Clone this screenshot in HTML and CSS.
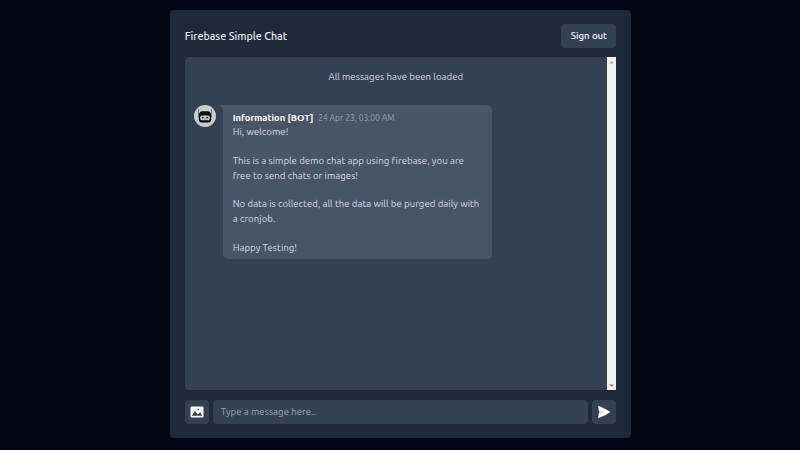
FILE: index.html
```html
<!DOCTYPE html>
<html lang="en">
<head>
<meta charset="utf-8">
<title>Firebase Simple Chat</title>
<link rel="stylesheet" href="styles.css">
</head>
<body>
<main class="panel">
  <header class="header">
    <h1 class="title">Firebase Simple Chat</h1>
    <button class="button signout">Sign out</button>
  </header>
  <section class="chat">
    <div class="messages">
      <p class="loaded">All messages have been loaded</p>
      <article class="message">
        <svg class="avatar" viewBox="0 0 22 22">
          <circle cx="11" cy="11" r="11" fill="#c9ccd3"/>
          <path d="M4.6 4v8M17.4 4v8" stroke="#5c6068" stroke-width=".8"/>
          <path d="M4.8 11Q4.8 6.2 8.5 6.2h5Q17.2 6.2 17.2 11v3.5Q17.2 17.6 14 17.6H8Q4.8 17.6 4.8 14.5z" fill="#090909"/>
          <rect x="6.2" y="10.4" width="9.6" height="4.8" rx="1.8" fill="#c9ccd3"/>
          <circle cx="8.7" cy="12.6" r=".95" fill="#111"/><circle cx="13.3" cy="12.6" r=".95" fill="#111"/>
          <path d="M10 13.9h2" stroke="#333" stroke-width=".5"/>
        </svg>
        <div class="bubble">
          <div class="meta"><strong class="author">Information [BOT]</strong><time class="time">24 Apr 23, 03:00 AM</time></div>
          <p class="line">Hi, welcome!</p>
          <p class="line gap">This is a simple demo chat app using firebase, you are<br>free to send chats or images!</p>
          <p class="line gap">No data is collected, all the data will be purged daily with<br>a cronjob.</p>
          <p class="line gap">Happy Testing!</p>
        </div>
      </article>
    </div>
    <div class="scrollbar">
      <svg viewBox="0 0 9 9"><path d="M2 6.4 4.5 4 7 6.4z" fill="#a3a3a3"/></svg>
      <svg viewBox="0 0 9 9"><path d="M2 3.4 4.5 5.8 7 3.4z" fill="#7c7c7c"/></svg>
    </div>
  </section>
  <footer class="composer">
    <button class="button icon" aria-label="Image">
      <svg class="image-icon" viewBox="0 0 14 12"><rect x=".5" y=".5" width="13" height="11" rx="1.3" fill="#fff"/><path d="M1.8 9.7 5 5 7.8 8.4 10 6.2 12.3 9.7z" fill="#334155"/><circle cx="8.3" cy="3.4" r=".9" fill="#64748b"/></svg>
    </button>
    <div class="input">Type a message here..</div>
    <button class="button icon" aria-label="Send">
      <svg class="send-icon" viewBox="0 0 14 14"><path d="M1.3 1.2Q5 2.2 13 6.9 8 10.7 1.3 12.8L2.4 7.5 7.2 7 2.4 6.5z" fill="#fff" stroke="#fff" stroke-width=".5" stroke-linejoin="round"/></svg>
    </button>
  </footer>
</main>
</body>
</html>
```
FILE: styles.css
```css
* { box-sizing: border-box; margin: 0; padding: 0; }
body {
  height: 450px;
  overflow: hidden;
  padding-top: 9.6px;
  background: #020617;
  color: #e8edf4;
  font: 9.6px/14.4px "Ubuntu", "Noto Sans", sans-serif;
}
.panel {
  display: flex;
  flex-direction: column;
  width: 460.8px;
  height: 428.4px;
  margin: 0 auto 0 170.2px;
  padding: 14.4px 14.7px 14.4px 14.5px;
  border-radius: 4px;
  background: #1e293b;
}
.header { display: flex; justify-content: space-between; align-items: center; height: 24px; margin-bottom: 9.4px; }
.title { font-size: 10.7px; font-weight: 500; }
.button { border: 0; border-radius: 4px; background: #334155; color: #f8fafc; font: inherit; }
.signout { width: 55.2px; height: 24px; padding-left: .5px; font-weight: 500; }
.chat { display: flex; flex: 1; overflow: hidden; border-radius: 4px 0 0 4px; background: #334155; }
.messages { flex: 1; padding: 9.6px; }
.loaded { height: 19.2px; line-height: 19.2px; margin-bottom: 19px; text-align: center; color: #d3dbe6; letter-spacing: .045px; }
.message { display: flex; }
.avatar { width: 22px; height: 22px; margin-right: 7px; }
.bubble {
  position: relative;
  width: 268.6px;
  height: 153.5px;
  padding: 5.9px 9.4px 0;
  border-radius: 0 4.8px 4.8px 4.8px;
  background: #475569;
  color: #d3dbe6;
}
.bubble::before { content: ""; position: absolute; left: -4px; top: 0; border-top: 5px solid #475569; border-left: 5px solid transparent; }
.meta { display: flex; gap: 4.8px; height: 14.4px; white-space: nowrap; }
.author { color: #fff; font-size: 9.4px; font-weight: 700; }
.time { font-size: 8.45px; color: #94a3b8; }
.line { white-space: nowrap; letter-spacing: .048px; }
.gap { margin-top: 14.4px; }
.scrollbar { display: flex; flex-direction: column; justify-content: space-between; width: 9.4px; background: #f1f1f1; }
.scrollbar svg { display: block; width: 9px; height: 9px; }
.composer { display: flex; gap: 4.8px; height: 24px; margin-top: 9.6px; }
.icon { display: flex; align-items: center; justify-content: center; width: 24px; height: 24px; }
.image-icon { width: 14px; height: 12px; }
.send-icon { width: 14px; height: 14px; }
.input { flex: 1; padding: 0 7.2px; border-radius: 4px; background: #334155; color: #9ca3af; line-height: 24px; letter-spacing: .045px; }
```
